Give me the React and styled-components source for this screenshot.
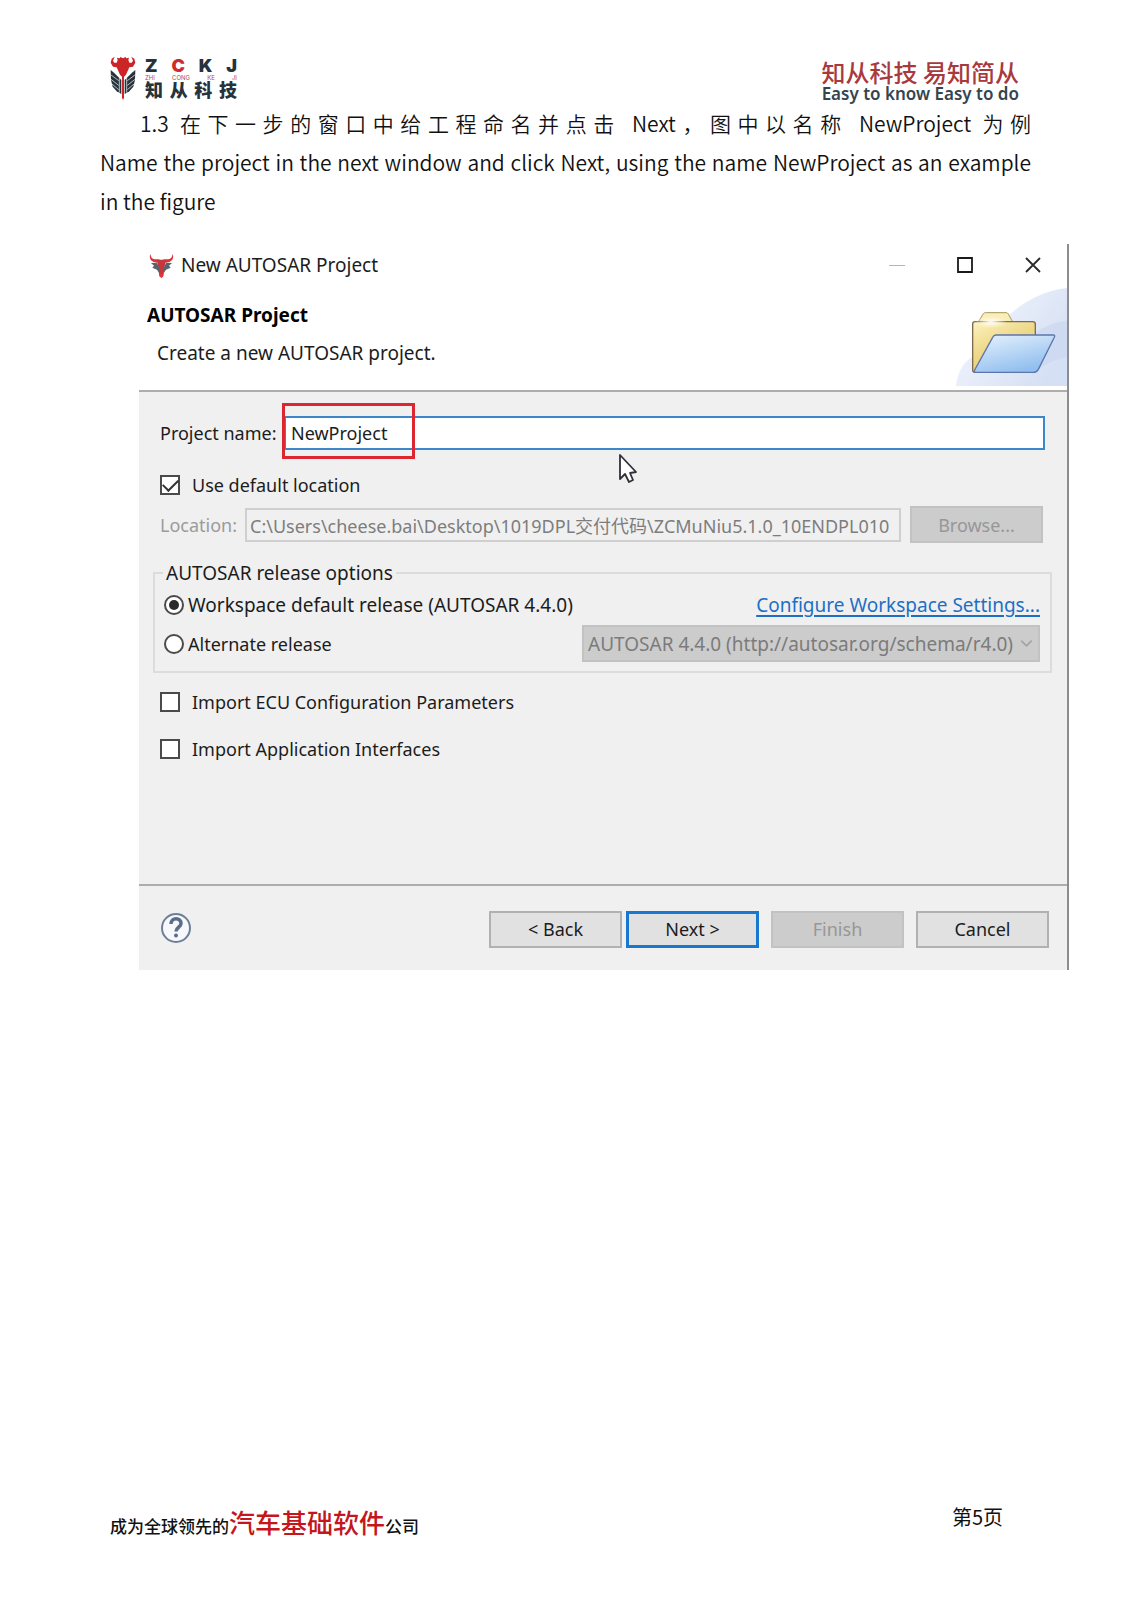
import React, { useState } from 'react';
import styled, { createGlobalStyle } from 'styled-components';
import { ChevronDown } from 'lucide-react';

const GlobalStyle = createGlobalStyle`
  * { box-sizing: border-box; }
  body {
    margin: 0;
    background: #fff;
  }
`

const cjk = '"Noto Sans CJK SC", sans-serif';
const ui = '"Noto Sans", "Noto Sans CJK SC", sans-serif';

const Page = styled.div`
  display: flex;
  flex-direction: column;
  min-height: 100vh;
  padding: 56px 0 54px;
  font-family: ${cjk};
  color: #111;
`

const Header = styled.header`
  display: flex;
  justify-content: space-between;
  height: 48px;
  padding: 0 112px 0 110px;
`

const Brand = styled.div`
  display: flex;
  gap: 9px;
`

const BrandWords = styled.div`
  width: 92px;
  padding-top: 1px;
`

const Letters = styled.div`
  display: flex;
  justify-content: space-between;
  font-family: ${props => props.$latin ? 'Inter, sans-serif' : cjk};
  font-size: ${props => props.$size}px;
  line-height: ${props => props.$line}px;
  font-weight: ${props => props.$weight || 400};
  color: ${props => props.$red ? '#b8474a' : '#26333c'};
`

const Red = styled.span`
  color: #cf2a2c;
`

const Slogan = styled.div`
  text-align: right;
  color: #a8393d;
  font-size: 24px;
  line-height: 32px;
  font-weight: 500;
`

const SloganEnglish = styled.div`
  font-family: ${ui};
  font-size: 17px;
  line-height: 12px;
  font-weight: 600;
  color: #34454e;
`

const Copy = styled.div`
  padding: 0 100px;
  font-size: 21px;
  line-height: 39px;
  font-weight: 350;
`

const Line = styled.p`
  margin: 0;
  text-indent: ${props => props.$indent ? 40 : 0}px;
  text-align: justify;
  text-align-last: ${props => props.$indent ? 'justify' : 'left'};
`

const Dialog = styled.section`
  display: flex;
  flex-direction: column;
  margin: 23px 62px 0 139px;
  border-right: 2px solid #8b8d91;
  background: #f0f0f0;
  font-family: ${ui};
  font-size: 19px;
  line-height: 26px;
  color: #1c1c1c;
`

const TitleBar = styled.div`
  display: flex;
  align-items: center;
  height: 42px;
  padding-left: 10px;
  gap: 7px;
  background: #fff;
`

const Title = styled.span`
  flex: 1;
`

const WindowButtons = styled.div`
  display: flex;
`

const WindowButton = styled.button`
  width: 68px;
  height: 40px;
  padding: 0;
  border: 0;
  background: none;
  svg { display: block; margin: auto; }
`

const Banner = styled.div`
  display: flex;
  justify-content: space-between;
  align-items: flex-end;
  height: 106px;
  padding-bottom: 4px;
  background: #fff;
  border-bottom: 2px solid #adadad;
`

const BannerText = styled.div`
  align-self: flex-start;
  padding: 16px 0 0 8px;
`

const Heading = styled.h1`
  margin: 0 0 12px;
  font-size: 19px;
  line-height: 26px;
  font-weight: 700;
  color: #000;
`

const Hint = styled.p`
  margin: 0 10px;
`

const Form = styled.form`
  display: flex;
  flex-direction: column;
  height: 492px;
  padding: 24px 22px 0 21px;
`

const Row = styled.div`
  display: flex;
  align-items: center;
  gap: ${props => props.$gap || 0}px;
  margin-bottom: ${props => props.$after || 0}px;
`

const Label = styled.label`
  white-space: nowrap;
  width: ${props => props.$width ? `${props.$width}px` : 'auto'};
  font-size: ${props => props.$large ? 19 : 18}px;
  color: ${props => props.$muted ? '#9b9b9b' : 'inherit'};
`

const Field = styled.div`
  position: relative;
  flex: 1;
  min-width: 0;
`

const TextBox = styled.input`
  display: block;
  width: 100%;
  height: 34px;
  padding: 0 ${props => props.disabled ? 3 : 5}px;
  border: ${props => props.disabled ? '2px solid #cfcfcf' : '2px solid #3c87c9'};
  border-radius: 0;
  background: ${props => props.disabled ? '#f0f0f0' : '#fff'};
  color: ${props => props.disabled ? '#7d7d7d' : '#1c1c1c'};
  font-family: inherit;
  font-size: 18px;
  outline: none;
`

const Highlight = styled.div`
  position: absolute;
  left: -2px;
  top: -13px;
  width: 133px;
  height: 56px;
  border: 3px solid #dc2730;
  pointer-events: none;
`

const Pointer = styled.svg`
  position: absolute;
  left: 334px;
  top: 38px;
`

const CheckBox = styled.input`
  appearance: none;
  display: grid;
  place-items: center;
  width: 20px;
  height: 20px;
  margin: 0;
  border: 2px solid #4a4a4a;
  background: #fff;
  &:checked::after {
    content: '';
    width: 13px;
    height: 7px;
    border: solid #333;
    border-width: 0 0 2px 2px;
    transform: translateY(-2px) rotate(-45deg);
  }
`

const Radio = styled.input`
  appearance: none;
  display: grid;
  place-items: center;
  width: 20px;
  height: 20px;
  margin: 0;
  border: 2px solid #4a4a4a;
  border-radius: 50%;
  background: #fff;
  &:checked::after {
    content: '';
    width: 10px;
    height: 10px;
    border-radius: 50%;
    background: #2b2b2b;
  }
`

const Button = styled.button`
  width: 133px;
  height: 37px;
  padding: 0;
  border: ${props => props.$primary ? '3px solid #1878cf' : '2px solid #b1b1b1'};
  background: #e1e1e1;
  color: #1c1c1c;
  font-family: inherit;
  font-size: 18px;
  &:disabled {
    border-color: #c2c2c2;
    background: #cccccc;
    color: #979797;
  }
`

const BrowseButton = styled(Button)`
  margin: 0 2px 0 9px;
`

const Group = styled.fieldset`
  min-width: 0;
  margin: 0 -7px 16px;
  padding: 0 10px 8px 9px;
  border: 2px solid #dcdcdc;
`

const Legend = styled.legend`
  padding: 0 3px;
  margin-left: -1px;
`

const Option = styled.div`
  display: flex;
  align-items: center;
  justify-content: space-between;
  height: ${props => props.$height}px;
`

const Choice = styled.div`
  display: flex;
  align-items: center;
  gap: 4px;
`

const Link = styled.a`
  color: #1d6fc4;
  text-decoration: underline;
  text-underline-offset: 3px;
  text-decoration-thickness: 2px;
`

const SelectBox = styled.div`
  position: relative;
  width: 458px;
  svg {
    position: absolute;
    right: 4px;
    top: 9px;
  }
`

const Select = styled.select`
  appearance: none;
  display: block;
  width: 100%;
  height: 37px;
  padding: 0 4px;
  border: 2px solid #c2c2c2;
  border-radius: 0;
  background: #cccccc;
  color: #7b7b7b;
  font: inherit;
  opacity: 1;
`

const Actions = styled.div`
  display: flex;
  align-items: center;
  gap: 12px;
  height: 86px;
  padding: 2px 18px 0 21px;
  border-top: 2px solid #adadad;
`

const HelpButton = styled.button`
  margin-right: auto;
  padding: 0;
  border: 0;
  background: none;
  svg { display: block; }
`

const Pair = styled.div`
  display: flex;
  gap: 4px;
`

const Footer = styled.footer`
  display: flex;
  justify-content: space-between;
  margin-top: auto;
  padding: 0 128px 0 110px;
  line-height: 40px;
`

const Motto = styled.div`
  font-size: 17px;
  font-weight: 500;
`

const Big = styled.span`
  font-size: 26px;
  color: #c4161c;
`

const PageNumber = styled.div`
  font-size: 20px;
  line-height: 30px;
`

const Emblem = () => (
  <svg width="26" height="44" viewBox="0 0 78 132" aria-hidden="true">
    <g fill="#26333c">
      <path d="M2 42 L12 50 L34 72 V114 L20 106 L8 92 L3 72 Z" />
      <path d="M76 42 L66 50 L44 72 V114 L58 106 L70 92 L75 72 Z" />
    </g>
    <g stroke="#fff" strokeWidth="2" fill="none">
      <path d="M2 56 L26 74 M3 70 L26 88 M6 84 L26 101 M28 66 V110" />
      <path d="M76 56 L52 74 M75 70 L52 88 M72 84 L52 101 M50 66 V110" />
    </g>
    <g fill="#cb2527">
      <path d="M14 2 L5 8 L2 20 L9 32 L20 34 L30 56 L36 62 V126 L39 131 L42 126 V62 L48 56 L58 34 L69 32 L76 20 L73 8 L64 2 L69 14 L65 20 L58 20 L55 12 L57 5 L49 7 L46 2 L42 6 H36 L32 2 L29 7 L21 5 L23 12 L20 20 L13 20 L9 14 Z" />
    </g>
  </svg>
)

const BullIcon = () => (
  <svg width="25" height="25" viewBox="0 0 75 75" aria-hidden="true">
    <path d="M4 2 C0 14 4 24 14 27 L28 29 H48 L61 27 C71 24 75 14 71 2 C70 12 66 18 58 19 L48 19 L37 22 L27 19 L17 19 C9 18 5 12 4 2 Z" fill="#d8343a" />
    <path d="M24 20 H51 L46 46 L43 70 L37 74 L31 70 L28 46 Z" fill="#c6363b" />
    <path d="M6 30 L24 29 L31 46 L32 62 L24 50 L10 44 L15 38 Z" fill="#59636c" />
    <path d="M69 30 L51 29 L44 46 L43 62 L51 50 L65 44 L60 38 Z" fill="#59636c" />
    <path d="M32 64 H43 L42 71 L37 74 L33 71 Z" fill="#e4383d" />
  </svg>
)

const FolderArt = () => (
  <svg width="111" height="98" viewBox="0 0 333 294" aria-hidden="true">
    <defs>
      <linearGradient id="sky" x1="0" y1="0" x2="1" y2="0.6">
        <stop offset="0" stopColor="#f7f9fe" />
        <stop offset="1" stopColor="#d6e0f4" />
      </linearGradient>
      <linearGradient id="back" x1="0" y1="0" x2="0.6" y2="1">
        <stop offset="0" stopColor="#fdf2c0" />
        <stop offset="0.5" stopColor="#eed98a" />
        <stop offset="1" stopColor="#e6c863" />
      </linearGradient>
      <linearGradient id="front" x1="0" y1="0" x2="0.5" y2="1">
        <stop offset="0" stopColor="#e8f3fd" />
        <stop offset="1" stopColor="#92bfef" />
      </linearGradient>
      <radialGradient id="shine">
        <stop offset="0" stopColor="#fffef6" />
        <stop offset="1" stopColor="#fffef6" stopOpacity="0" />
      </radialGradient>
    </defs>
    <path d="M0 294 C5 250 25 215 60 200 L150 90 C200 40 265 8 333 0 V294 Z" fill="url(#sky)" />
    <path d="M333 98 C290 102 250 120 220 150 L230 260 C265 228 295 215 333 208 Z" fill="#c8d5f0" opacity="0.6" />
    <path d="M68 100 L82 77 Q84 74 88 74 H150 Q155 74 157 78 L170 102 Z" fill="#f9edb8" stroke="#a8975d" strokeWidth="3" />
    <path d="M50 108 Q50 101 57 101 H230 Q238 101 238 109 V160 L60 253 Q50 254 50 246 Z" fill="url(#back)" stroke="#806a4c" strokeWidth="4" />
    <ellipse cx="105" cy="102" rx="50" ry="18" fill="url(#shine)" />
    <path d="M110 148 Q113 141 120 141 H292 Q298 141 295 148 L247 244 Q242 253 232 253 H60 Q53 253 56 246 Z" fill="url(#front)" stroke="#5c76ad" strokeWidth="4" />
  </svg>
)

const HelpIcon = () => (
  <svg width="32" height="32" viewBox="0 0 32 32" fill="none" aria-hidden="true">
    <circle cx="16" cy="15" r="14" fill="#f6f8fb" stroke="#6d7f98" strokeWidth="2" />
    <path d="M11 11 C11 4 21 4 21 10.500 C21 14.500 16 14 16 18.500" stroke="#5a6d89" strokeWidth="3.500" />
    <circle cx="16" cy="22.500" r="2" fill="#5a6d89" />
  </svg>
)

const Check = ({ id, label, after, defaultChecked }) => (
  <Row $gap={12} $after={after}>
    <CheckBox type="checkbox" id={id} defaultChecked={defaultChecked} />
    <Label htmlFor={id}>{label}</Label>
  </Row>
)

const App = () => {
  const [name, setName] = useState('NewProject');

  return (
    <Page lang="zh-CN">
      <GlobalStyle />
      <Header>
        <Brand>
          <Emblem />
          <BrandWords>
            <Letters $latin $size={18} $line={18} $weight={900}>
              <span>Z</span><Red>C</Red><span>K</span><span>J</span>
            </Letters>
            <Letters $latin $red $size={6} $line={6}>
              <span>ZHI</span><span>CONG</span><span>KE</span><span>JI</span>
            </Letters>
            <Letters $size={18} $line={16} $weight={900}>
              <span>知</span><span>从</span><span>科</span><span>技</span>
            </Letters>
          </BrandWords>
        </Brand>
        <Slogan>
          知从科技 易知简从
          <SloganEnglish>Easy to know Easy to do</SloganEnglish>
        </Slogan>
      </Header>

      <Copy>
        <Line $indent>1.3 在下一步的窗口中给工程命名并点击 Next，图中以名称 NewProject 为例</Line>
        <Line>Name the project in the next window and click Next, using the name NewProject as an example in the figure</Line>
      </Copy>

      <Dialog>
        <TitleBar>
          <BullIcon />
          <Title>New AUTOSAR Project</Title>
          <WindowButtons>
            <WindowButton aria-label="Minimize">
              <svg width="16" height="16"><path d="M0 8.500 H16" stroke="#b5b5b5" /></svg>
            </WindowButton>
            <WindowButton aria-label="Maximize">
              <svg width="16" height="16"><path d="M1 1 H15 V15 H1 Z" fill="none" stroke="#1a1a1a" strokeWidth="1.800" /></svg>
            </WindowButton>
            <WindowButton aria-label="Close">
              <svg width="16" height="16"><path d="M1 1 L15 15 M15 1 L1 15" stroke="#2a2a2a" strokeWidth="1.800" /></svg>
            </WindowButton>
          </WindowButtons>
        </TitleBar>
        <Banner>
          <BannerText>
            <Heading>AUTOSAR Project</Heading>
            <Hint>Create a new AUTOSAR project.</Hint>
          </BannerText>
          <FolderArt />
        </Banner>

        <Form>
          <Row $after={22}>
            <Label htmlFor="name" $width={124}>Project name:</Label>
            <Field>
              <TextBox id="name" value={name} onChange={e => setName(e.target.value)} />
              <Highlight />
              <Pointer width="22" height="30" viewBox="0 0 22 30" aria-hidden="true">
                <path d="M2 1 V25 L7 20 L11 28 L15 26 L12 19 L18 18 Z" fill="#fff" stroke="#2f3038" strokeWidth="1.800" strokeLinejoin="round" />
              </Pointer>
            </Field>
          </Row>
          <Check id="default-location" label="Use default location" after={8} defaultChecked />
          <Row $after={17}>
            <Label htmlFor="location" $muted $width={85}>Location:</Label>
            <Field>
              <TextBox id="location" disabled defaultValue={'C:\\Users\\cheese.bai\\Desktop\\1019DPL交付代码\\ZCMuNiu5.1.0_10ENDPL010'} />
            </Field>
            <BrowseButton type="button" disabled>Browse...</BrowseButton>
          </Row>
          <Group>
            <Legend>AUTOSAR release options</Legend>
            <Option $height={38}>
              <Choice>
                <Radio type="radio" name="release" id="workspace" defaultChecked />
                <Label $large htmlFor="workspace">Workspace default release (AUTOSAR 4.4.0)</Label>
              </Choice>
              <Link href="#settings">Configure Workspace Settings...</Link>
            </Option>
            <Option $height={39}>
              <Choice>
                <Radio type="radio" name="release" id="alternate" />
                <Label htmlFor="alternate">Alternate release</Label>
              </Choice>
              <SelectBox>
                <Select disabled aria-label="Alternate release schema">
                  <option>AUTOSAR 4.4.0 (http://autosar.org/schema/r4.0)</option>
                </Select>
                <ChevronDown size={19} color="#a3a3a3" strokeWidth={2} />
              </SelectBox>
            </Option>
          </Group>
          <Check id="ecu" label="Import ECU Configuration Parameters" after={21} />
          <Check id="interfaces" label="Import Application Interfaces" />
        </Form>

        <Actions>
          <HelpButton aria-label="Help"><HelpIcon /></HelpButton>
          <Pair>
            <Button type="button">&lt; Back</Button>
            <Button type="button" $primary>Next &gt;</Button>
          </Pair>
          <Button type="button" disabled>Finish</Button>
          <Button type="button">Cancel</Button>
        </Actions>
      </Dialog>

      <Footer>
        <Motto>成为全球领先的<Big>汽车基础软件</Big>公司</Motto>
        <PageNumber>第5页</PageNumber>
      </Footer>
    </Page>
  )
}

export default App;
